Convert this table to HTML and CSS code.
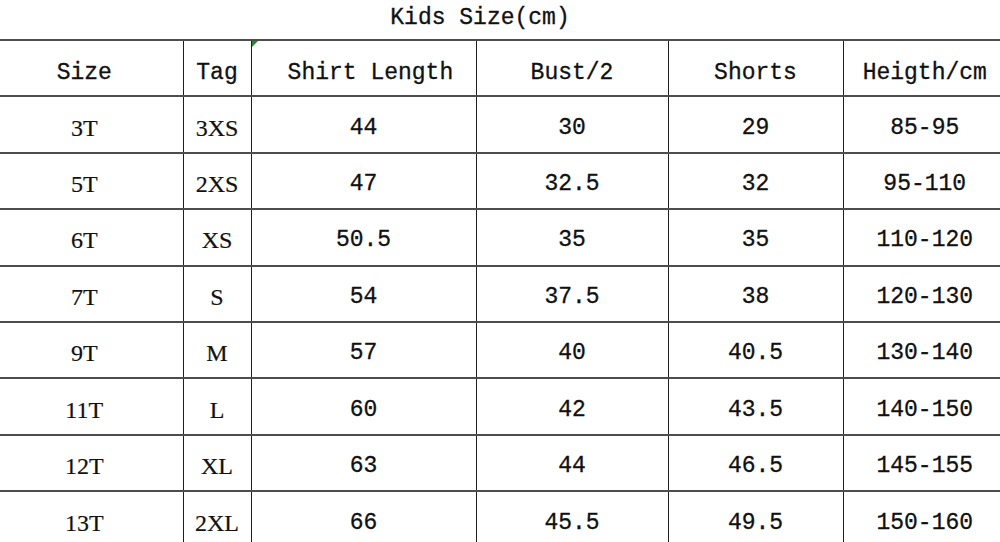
FILE: index.html
```html
<!DOCTYPE html>
<html>
<head>
<meta charset="utf-8">
<link rel="stylesheet" href="styles.css">
</head>
<body>
<div class="page">
  <div class="title">Kids Size(cm)</div>
  <table class="chart">
    <colgroup>
      <col class="c-size"><col class="c-tag"><col class="c-shirt"><col class="c-bust"><col class="c-shorts"><col class="c-height">
    </colgroup>
    <thead>
      <tr>
        <th class="first">Size</th>
        <th>Tag</th>
        <th class="marked"><span class="marker"></span>&nbsp;Shirt Length</th>
        <th>Bust/2</th>
        <th>Shorts</th>
        <th>Heigth/cm</th>
      </tr>
    </thead>
    <tbody>
      <tr><td class="first serif">3T</td><td class="serif">3XS</td><td>44</td><td>30</td><td>29</td><td>85-95</td></tr>
      <tr><td class="first serif">5T</td><td class="serif">2XS</td><td>47</td><td>32.5</td><td>32</td><td>95-110</td></tr>
      <tr><td class="first serif">6T</td><td class="serif">XS</td><td>50.5</td><td>35</td><td>35</td><td>110-120</td></tr>
      <tr><td class="first serif">7T</td><td class="serif">S</td><td>54</td><td>37.5</td><td>38</td><td>120-130</td></tr>
      <tr><td class="first serif">9T</td><td class="serif">M</td><td>57</td><td>40</td><td>40.5</td><td>130-140</td></tr>
      <tr><td class="first serif">11T</td><td class="serif">L</td><td>60</td><td>42</td><td>43.5</td><td>140-150</td></tr>
      <tr><td class="first serif">12T</td><td class="serif">XL</td><td>63</td><td>44</td><td>46.5</td><td>145-155</td></tr>
      <tr><td class="first serif">13T</td><td class="serif">2XL</td><td>66</td><td>45.5</td><td>49.5</td><td>150-160</td></tr>
    </tbody>
  </table>
</div>
</body>
</html>
```
FILE: styles.css
```css
html, body {
  margin: 0;
  padding: 0;
  background: #ffffff;
}
body {
  width: 1000px;
  height: 542px;
  overflow: hidden;
}
.page {
  width: 1000px;
  color: #111111;
  font-family: "Liberation Mono", "DejaVu Sans Mono", monospace;
  font-size: 23px;
  -webkit-text-stroke: 0.3px #111111;
}
.title {
  height: 39px;
  line-height: 36px;
  text-align: center;
  padding-right: 40px;
  box-sizing: border-box;
}
.chart {
  border-collapse: collapse;
  table-layout: fixed;
  width: 1020px;
  margin-left: -14px;
}
.c-size { width: 197px; }
.c-tag { width: 68px; }
.c-shirt { width: 225px; }
.c-bust { width: 192px; }
.c-shorts { width: 175px; }
.c-height { width: 163px; }
.chart tr {
  height: 56.4px;
}
.chart th,
.chart td {
  height: 48.4px;
  padding: 6px 0 0 0;
  line-height: 26px;
  text-align: center;
  vertical-align: middle;
  border-top: 2px solid #4d4d4d;
  border-left: 1.5px solid #1e1e1e;
  font-weight: normal;
  white-space: nowrap;
}
.chart th {
  height: 45.4px;
  padding-top: 9px;
}
.chart .first {
  border-left: none;
}
.chart td.serif {
  font-family: "Liberation Serif", "Times New Roman", serif;
  font-size: 24px;
  -webkit-text-stroke: 0.2px #111111;
}
.marked {
  position: relative;
}
.marker {
  position: absolute;
  left: 0;
  top: 0;
  width: 0;
  height: 0;
  border-top: 6px solid #1f8a2a;
  border-right: 6px solid transparent;
}
```
